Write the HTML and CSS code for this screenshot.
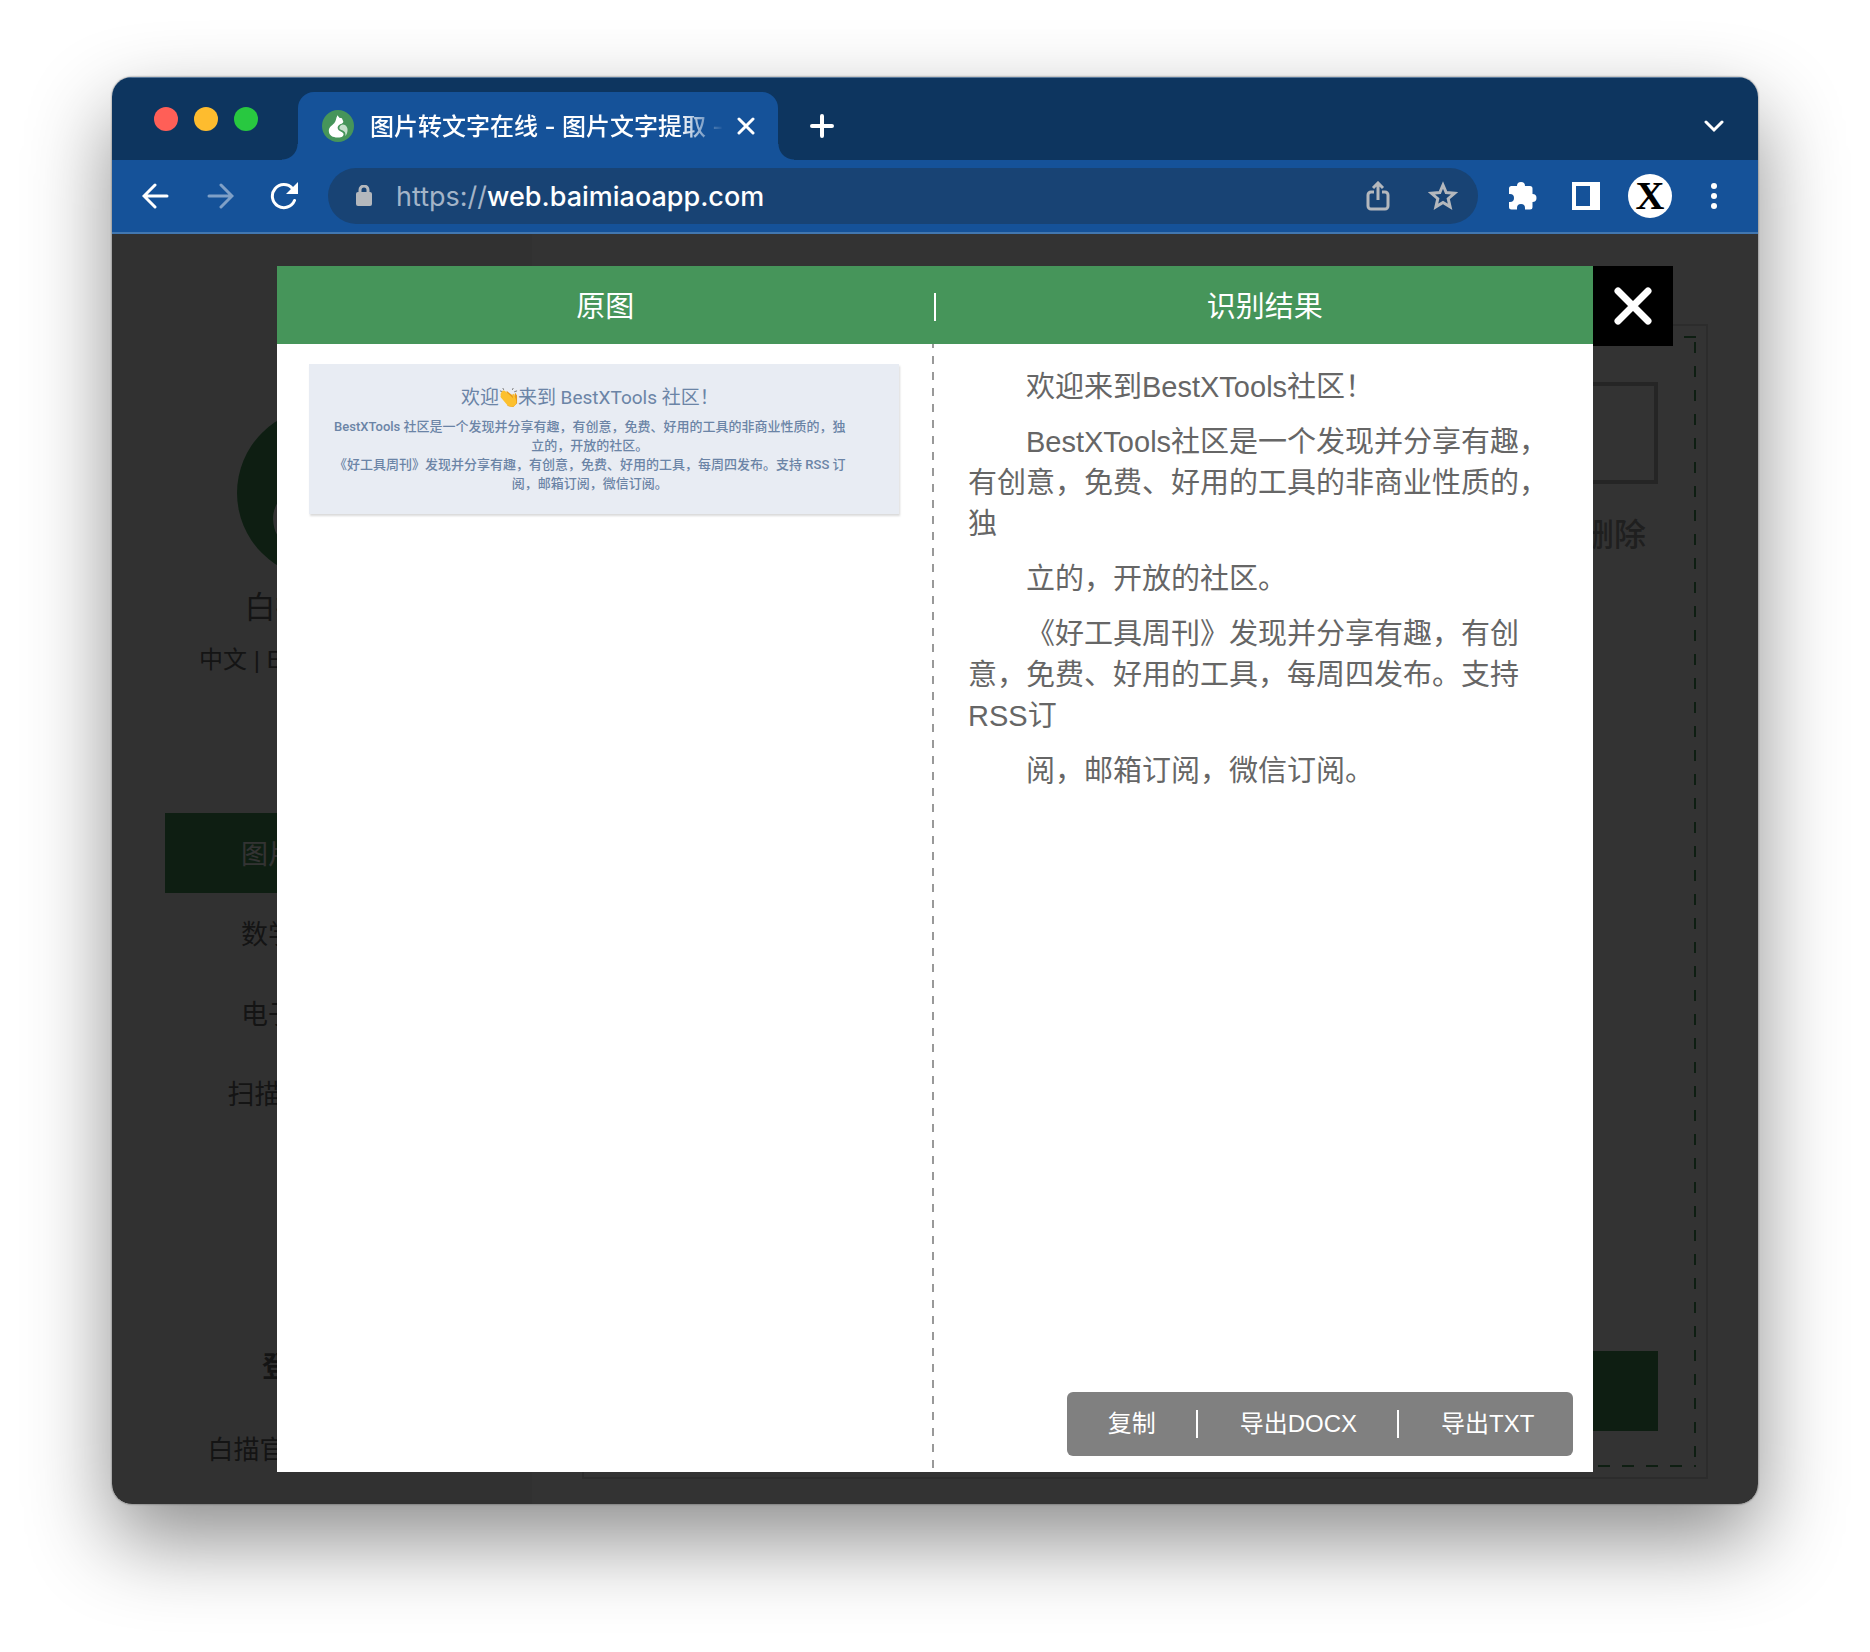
FILE: index.html
```html
<!DOCTYPE html>
<html lang="zh-CN">
<head>
<meta charset="utf-8">
<title>图片转文字在线 - 图片文字提取</title>
<meta name="viewport" content="width=device-width, initial-scale=1">
<link rel="stylesheet" href="styles.css">
</head>
<body>
<svg class="defs" aria-hidden="true">
  <symbol id="logo" viewBox="0 0 32 32">
    <circle class="logo-disc" cx="16" cy="16" r="16"/>
    <path class="logo-cat" d="M15.500 5.200l1.800 2.600 2.600.5 1.400 3.200c0 1.400-1 2-2.600 2.600-2.600 1.200-3.600 3-2.800 5 .8 1.900 3 2.300 4.600 3.400 1.700 1.200 1.500 3.600-.8 4.400-5.800 1.600-12.700.1-12.900-5.900-.1-3.900 3.100-5.400 5.400-7.800 2-2.200 1.500-4.600 3.300-8z"/>
    <path class="logo-tail" d="M17.400 18c0-2.600 3-4.400 5.600-2.900 3.600 2.200 3.200 7.600.4 11 .3-2.800-.4-4.400-2.600-5.500-1.800-.9-3.400-1-3.400-2.600z"/>
  </symbol>
</svg>

<div class="window">
  <header class="tabstrip">
    <div class="lights"><span class="light red"></span><span class="light yellow"></span><span class="light green"></span></div>
    <div class="tab">
      <svg class="favicon" aria-hidden="true"><use href="#logo"/></svg>
      <span class="tab-title">图片转文字在线 - 图片文字提取 -</span>
      <button class="icon-btn" aria-label="关闭标签页"><svg width="18" height="18" viewBox="0 0 18 18"><path class="line" d="M2 2l14 14M16 2L2 16"/></svg></button>
    </div>
    <button class="icon-btn new-tab" aria-label="新标签页"><svg width="24" height="24" viewBox="0 0 24 24"><path class="line thick" d="M12 2v20M2 12h20"/></svg></button>
    <button class="icon-btn tab-search" aria-label="搜索标签页"><svg width="20" height="14" viewBox="0 0 20 14"><path class="line" d="M2 3l8 8 8-8"/></svg></button>
  </header>

  <nav class="toolbar">
    <button class="icon-btn" aria-label="后退"><svg width="28" height="28" viewBox="0 0 28 28"><path class="line" d="M25 14H3M13 3L2 14l11 11"/></svg></button>
    <button class="icon-btn faded" aria-label="前进"><svg width="28" height="28" viewBox="0 0 28 28"><path class="line" d="M3 14h22M15 3l11 11-11 11"/></svg></button>
    <button class="icon-btn" aria-label="重新加载"><svg width="28" height="28" viewBox="0 0 28 28"><path class="line" d="M24.500 18.500A11.500 11.500 0 1 1 22.500 6.500"/><path class="solid" d="M28 0v12H16z"/></svg></button>
    <div class="omnibox">
      <svg width="16" height="22" viewBox="0 0 16 22"><rect class="muted-fill" y="7" width="16" height="14" rx="2"/><path class="muted-line" d="M4 8V5a4 4 0 0 1 8 0v3"/></svg>
      <span class="url"><span class="scheme">https://</span>web.baimiaoapp.com</span>
      <button class="icon-btn" aria-label="分享"><svg width="24" height="30" viewBox="0 0 24 30"><path class="muted-line" d="M8 11H5a3 3 0 0 0-3 3v11a3 3 0 0 0 3 3h14a3 3 0 0 0 3-3V14a3 3 0 0 0-3-3h-3M12 19V3M7 7l5-5 5 5"/></svg></button>
      <button class="icon-btn star" aria-label="收藏"><svg width="30" height="30" viewBox="0 0 30 30"><path class="muted-line" d="M15 4l3.200 7.600 8.300.7-6.300 5.400 1.900 8.100L15 21.500l-7.100 4.300 1.900-8.100-6.300-5.400 8.300-.7z"/></svg></button>
    </div>
    <button class="icon-btn" aria-label="扩展程序"><svg width="30" height="30" viewBox="0 0 30 30"><path class="solid" d="M9 5a4 4 0 0 1 8 0h5a2.500 2.500 0 0 1 2.500 2.500V13a4 4 0 0 1 0 8v5a2.500 2.500 0 0 1-2.500 2.500h-5V27a4 4 0 0 0-8 0v1.500H3.500A2.500 2.500 0 0 1 1 26v-5h1a4 4 0 0 0 0-8H1V7.500A2.500 2.500 0 0 1 3.500 5z"/></svg></button>
    <button class="icon-btn" aria-label="侧边栏"><svg width="28" height="28" viewBox="0 0 28 28"><path class="solid" fill-rule="evenodd" d="M0 0h28v28H0zM4 4v20h14V4z"/></svg></button>
    <button class="avatar" aria-label="用户">X</button>
    <button class="icon-btn" aria-label="菜单"><svg width="8" height="28" viewBox="0 0 8 28"><circle class="solid" cx="4" cy="4" r="3"/><circle class="solid" cx="4" cy="14" r="3"/><circle class="solid" cx="4" cy="24" r="3"/></svg></button>
  </nav>

  <div class="viewport">
    <div class="page">
      <aside class="sidebar">
        <svg class="brand" aria-hidden="true"><use href="#logo"/></svg>
        <h1 class="brand-name">白描网页版</h1>
        <p class="langs">中文 | English | 日本語</p>
        <ul class="menu">
          <li class="menu-item active">图片文字提取</li>
          <li class="menu-item">数学公式识别</li>
          <li class="menu-item">电子表格识别</li>
          <li class="menu-item">扫描文件转文字</li>
        </ul>
        <p class="login">登录/注册</p>
        <p class="site">白描官网 | 联系我们</p>
      </aside>
      <main class="main">
        <div class="panel">
          <div class="dropzone">
            <div class="preview"></div>
            <p class="remove">删除</p>
            <div class="start"></div>
          </div>
        </div>
      </main>
    </div>

    <div class="overlay">
      <section class="modal" role="dialog" aria-label="识别结果">
        <header class="modal-head"><h2 class="modal-title">原图</h2><span class="head-rule"></span><h2 class="modal-title">识别结果</h2></header>
        <button class="close" aria-label="关闭"><svg width="40" height="40" viewBox="0 0 40 40"><path class="line heavy" d="M5 5l30 30M35 5L5 35"/></svg></button>
        <div class="modal-body">
          <div class="source">
            <figure class="card">
              <h3 class="card-title">欢迎<svg class="clap" viewBox="0 0 20 20" aria-hidden="true"><path class="spark" d="M1 3l3 1M4 0l1 2M14 2l1-2M16 4l3-1"/><path class="hand-back" d="M8 3l8 6 1-4 2 3v8l-4 4-6-1z"/><path class="hand" d="M3 4q1-2 3-1l5 4 4 4-1-4q1-2 2 0l2 6q1 4-2 6-4 2-8-2l-6-7q-1-2 0-2-1-2 1-4z"/></svg>来到 BestXTools 社区！</h3>
              <p class="card-text">BestXTools 社区是一个发现并分享有趣，有创意，免费、好用的工具的非商业性质的，独<br>立的，开放的社区。<br>《好工具周刊》发现并分享有趣，有创意，免费、好用的工具，每周四发布。支持 RSS 订<br>阅，邮箱订阅，微信订阅。</p>
            </figure>
          </div>
          <div class="result">
            <p>欢迎来到BestXTools社区！</p>
            <p>BestXTools社区是一个发现并分享有趣，有创意，免费、好用的工具的非商业性质的，独</p>
            <p>立的，开放的社区。</p>
            <p>《好工具周刊》发现并分享有趣，有创意，免费、好用的工具，每周四发布。支持RSS订</p>
            <p>阅，邮箱订阅，微信订阅。</p>
            <div class="actions"><button>复制</button><span class="rule"></span><button>导出DOCX</button><span class="rule"></span><button>导出TXT</button></div>
          </div>
        </div>
      </section>
    </div>
  </div>
</div>
</body>
</html>
```

FILE: styles.css
```css
* { box-sizing: border-box; }
body, h1, h2, h3, p, ul, figure { margin: 0; padding: 0; }
body {
  min-height: 100vh;
  display: flex;
  padding: 77px 112px 148px;
  background: #fff;
  font-family: "Liberation Sans", "Noto Sans CJK SC", sans-serif;
}
button { border: 0; padding: 0; background: none; font: inherit; color: inherit; }
svg { display: block; flex: none; }
.defs { position: absolute; width: 0; height: 0; }

.window {
  flex: 1;
  min-width: 0;
  display: flex;
  flex-direction: column;
  border-radius: 20px;
  overflow: hidden;
  box-shadow: 0 0 2px rgba(0, 0, 0, .6), 0 36px 84px rgba(0, 0, 0, .45);
}

.line { fill: none; stroke: #fff; stroke-width: 3; stroke-linecap: round; }
.thick { stroke-width: 4; }
.heavy { stroke-width: 7; }
.solid { fill: #fff; }
.muted-line { fill: none; stroke: #b4b8bd; stroke-width: 3; }
.muted-fill { fill: #b4b8bd; }
.logo-disc { fill: #46955a; }
.logo-cat { fill: #fff; }
.logo-tail { fill: #c5e0cc; }
.icon-btn { display: grid; place-items: center; flex: none; }
.faded { opacity: .45; }

/* Tab strip */
.tabstrip {
  height: 83px;
  display: flex;
  align-items: center;
  padding: 15px 34px 0 42px;
  background: #0d355f;
  box-shadow: inset 0 1px #56779b;
}
.lights { display: flex; gap: 16px; margin: -14px 40px 0 0; }
.light { width: 24px; height: 24px; border-radius: 50%; }
.red { background: #ff5f57; }
.yellow { background: #febc2e; }
.green { background: #28c840; }
.tab {
  position: relative;
  width: 480px;
  height: 68px;
  display: flex;
  align-items: center;
  padding: 0 23px 0 24px;
  border-radius: 16px 16px 0 0;
  background: #155299;
}
.tab::before, .tab::after {
  content: "";
  position: absolute;
  bottom: 0;
  width: 16px;
  height: 16px;
}
.tab::before { right: 100%; background: radial-gradient(circle at 0 0, transparent 15px, #155299 16px); }
.tab::after { left: 100%; background: radial-gradient(circle at 100% 0, transparent 15px, #155299 16px); }
.favicon { width: 32px; height: 32px; margin-right: 16px; }
.tab-title {
  flex: 1;
  white-space: nowrap;
  margin-right: 13px;
  padding-bottom: 4px;
  font-family: Inter, "Noto Sans CJK SC", sans-serif;
  font-size: 24px;
  font-weight: 500;
  color: #fff;
  mask-image: linear-gradient(to right, #000 calc(100% - 44px), transparent);
}
.new-tab { margin-left: 32px; }
.tab-search { margin-left: auto; }

/* Toolbar */
.toolbar {
  height: 74px;
  display: flex;
  align-items: center;
  gap: 36px;
  padding: 0 30px;
  background: #155299;
  border-bottom: 2px solid #4277b0;
}
.toolbar .icon-btn { width: 28px; }
.omnibox {
  flex: 1;
  height: 56px;
  display: flex;
  align-items: center;
  gap: 24px;
  margin: 0 -6px;
  padding: 0 22px 0 28px;
  border-radius: 28px;
  background: #184374;
}
.url { flex: 1; font: 500 27px Inter, sans-serif; color: #fff; }
.scheme { font-weight: 400; color: #a3b4c8; }
.star { margin-left: 12px; }
.avatar {
  width: 44px;
  height: 44px;
  margin: 0 -8px;
  border-radius: 50%;
  background: #fff;
  color: #000;
  font: 700 40px/44px "Liberation Serif", serif;
}

/* Page under the overlay */
.viewport { flex: 1; display: grid; background: #fff; }
.page, .overlay { grid-area: 1 / 1; min-width: 0; }
.page { display: flex; }
.sidebar {
  width: 420px;
  display: flex;
  flex-direction: column;
  align-items: center;
  padding-top: 174px;
  background: #f5f5f5;
  color: #666;
}
.brand { width: 170px; height: 170px; }
.brand-name { margin-top: 10px; font-size: 31px; line-height: 40px; font-weight: 400; }
.langs { margin-top: 14px; padding-right: 8px; font-size: 24px; line-height: 36px; }
.menu { width: 314px; margin-top: 135px; list-style: none; }
.menu-item { padding-top: 4px; font-size: 27px; line-height: 76px; text-align: center; }
.active { background: #46955a; color: #fff; }
.login { margin-top: 215px; font-size: 28px; line-height: 40px; font-weight: 700; }
.site { margin-top: 42px; font-size: 26px; line-height: 40px; }
.main { flex: 1; display: flex; padding: 90px 50px 25px; }
.panel { flex: 1; display: flex; padding: 10px; border: 2px solid #ddd; }
.dropzone {
  flex: 1;
  display: flex;
  flex-direction: column;
  padding: 46px 38px 36px;
  background:
    repeating-linear-gradient(to left, #46955a 0 12px, transparent 12px 24px) top / 100% 2px no-repeat,
    repeating-linear-gradient(to right, #46955a 0 8px, transparent 8px 20px, #46955a 20px 24px) bottom / 100% 2px no-repeat,
    repeating-linear-gradient(to bottom, transparent 0 6px, #46955a 6px 17px, transparent 17px 24px) left / 2px 100% no-repeat,
    repeating-linear-gradient(to bottom, transparent 0 6px, #46955a 6px 17px, transparent 17px 24px) right / 2px 100% no-repeat;
}
.preview { height: 102px; border: 4px solid #bbb; }
.remove { margin: 31px 12px auto; text-align: right; font-size: 32px; line-height: 40px; font-weight: 500; color: #999; }
.start { height: 80px; background: #46955a; }

/* Result dialog */
.overlay { position: relative; display: flex; padding: 32px 10%; background: rgba(0, 0, 0, .8); }
.modal { position: relative; flex: 1; min-width: 0; display: flex; flex-direction: column; background: #fff; }
.modal-head {
  height: 78px;
  display: grid;
  grid-template-columns: 1fr 2px 1fr;
  align-items: center;
  padding-top: 3px;
  background: #46955a;
  color: #fff;
}
.modal-title { font-size: 29px; line-height: 40px; font-weight: 400; text-align: center; }
.head-rule { height: 28px; background: #fff; }
.close {
  position: absolute;
  left: 100%;
  top: 0;
  width: 80px;
  height: 80px;
  display: grid;
  place-items: center;
  background: #000;
}
.modal-body { flex: 1; display: grid; grid-template-columns: calc(50% - 1px) 1fr; }
.source {
  padding: 20px 35px 20px 32px;
  background: repeating-linear-gradient(to bottom, #999 0 4px, transparent 4px 12px, #999 12px 16px) right / 2px 100% no-repeat;
}
.card {
  padding: 22px 28px 21px 0;
  background: #e8ecf3;
  box-shadow: 1px 2px 2px rgba(0, 0, 0, .15);
  color: #6b84a6;
  font-family: Roboto, "Noto Sans CJK SC", sans-serif;
  font-weight: 500;
  text-align: center;
  white-space: nowrap;
}
.card-title { font-size: 19px; line-height: 24px; font-weight: 400; }
.card-text { margin-top: 7px; font-size: 13px; line-height: 19px; }
.clap { display: inline-block; width: 19px; height: 19px; vertical-align: -3px; }
.hand { fill: #fcc02e; }
.hand-back { fill: #e79a1b; }
.spark { fill: none; stroke: #777; }
.result {
  position: relative;
  padding: 23px 34px;
  color: #666;
  font-size: 29px;
  line-height: 41px;
  text-indent: 58px;
}
.result p + p { margin-top: 14px; }
.actions {
  position: absolute;
  right: 20px;
  bottom: 16px;
  height: 64px;
  display: flex;
  align-items: center;
  border-radius: 6px;
  background: #808080;
  color: #fff;
  font-size: 24px;
  text-indent: 0;
}
.actions button { padding: 0 39px 0 41px; line-height: 64px; }
.rule { width: 2px; height: 28px; margin: 0 1px; background: #fff; }
```
